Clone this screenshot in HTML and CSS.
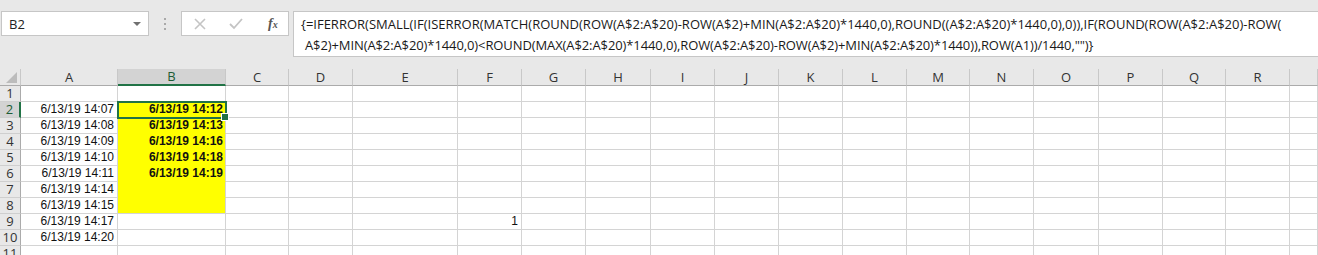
FILE: index.html
```html
<!DOCTYPE html>
<html lang="en">
<head>
    <meta charset="UTF-8">
    <title>Book1 - Excel</title>
    <link rel="stylesheet" href="styles.css">
</head>
<body>
    <div id="formula-bar">
        <div class="name-box">
            <span>B2</span>
            <i class="drop"></i>
        </div>
        <div class="grip">
            <svg width="3" height="12" viewBox="0 0 3 12"><rect x="0" y="0" width="2" height="2" fill="#a9a9a9"/><rect x="0" y="5" width="2" height="2" fill="#a9a9a9"/><rect x="0" y="10" width="2" height="2" fill="#a9a9a9"/></svg>
        </div>
        <div class="fx-box">
            <svg class="ico" width="12" height="12" viewBox="0 0 12 12"><path d="M1 1 L11 11 M11 1 L1 11" stroke="#c4c4c4" stroke-width="1.6" fill="none"/></svg>
            <svg class="ico" width="14" height="12" viewBox="0 0 14 12"><path d="M1 6 L5 10 L13 1" stroke="#c4c4c4" stroke-width="1.8" fill="none"/></svg>
            <span class="fx">f<sub>x</sub></span>
        </div>
        <div class="formula">
            <div class="line">{=IFERROR(SMALL(IF(ISERROR(MATCH(ROUND(ROW(A$2:A$20)-ROW(A$2)+MIN(A$2:A$20)*1440,0),ROUND((A$2:A$20)*1440,0),0)),IF(ROUND(ROW(A$2:A$20)-ROW(</div>
            <div class="line second">A$2)+MIN(A$2:A$20)*1440,0)&lt;ROUND(MAX(A$2:A$20)*1440,0),ROW(A$2:A$20)-ROW(A$2)+MIN(A$2:A$20)*1440)),ROW(A1))/1440,"")}</div>
        </div>
    </div>

    <table id="sheet">
        <colgroup>
            <col style="width:21px"><col style="width:97px"><col style="width:108px"><col style="width:63px">
            <col style="width:64px"><col style="width:105px"><col style="width:64px"><col style="width:64px">
            <col style="width:65px"><col style="width:64px"><col style="width:64px"><col style="width:64px">
            <col style="width:64px"><col style="width:63px"><col style="width:64px"><col style="width:65px">
            <col style="width:64px"><col style="width:63px"><col style="width:64px"><col style="width:28px">
        </colgroup>
        <tr class="head">
            <th class="corner"><i class="tri"></i></th>
            <th>A</th><th class="sel">B</th><th>C</th><th>D</th><th>E</th><th>F</th><th>G</th><th>H</th><th>I</th>
            <th>J</th><th>K</th><th>L</th><th>M</th><th>N</th><th>O</th><th>P</th><th>Q</th><th>R</th><th></th>
        </tr>
        <tr>
            <th class="rh">1</th>
            <td></td><td></td><td></td><td></td><td></td><td></td><td></td><td></td><td></td>
            <td></td><td></td><td></td><td></td><td></td><td></td><td></td><td></td><td></td><td></td>
        </tr>
        <tr>
            <th class="rh sel">2</th>
            <td>6/13/19 14:07</td><td class="fill active">6/13/19 14:12</td><td></td><td></td><td></td><td></td><td></td><td></td><td></td>
            <td></td><td></td><td></td><td></td><td></td><td></td><td></td><td></td><td></td><td></td>
        </tr>
        <tr>
            <th class="rh">3</th>
            <td>6/13/19 14:08</td><td class="fill">6/13/19 14:13</td><td></td><td></td><td></td><td></td><td></td><td></td><td></td>
            <td></td><td></td><td></td><td></td><td></td><td></td><td></td><td></td><td></td><td></td>
        </tr>
        <tr>
            <th class="rh">4</th>
            <td>6/13/19 14:09</td><td class="fill">6/13/19 14:16</td><td></td><td></td><td></td><td></td><td></td><td></td><td></td>
            <td></td><td></td><td></td><td></td><td></td><td></td><td></td><td></td><td></td><td></td>
        </tr>
        <tr>
            <th class="rh">5</th>
            <td>6/13/19 14:10</td><td class="fill">6/13/19 14:18</td><td></td><td></td><td></td><td></td><td></td><td></td><td></td>
            <td></td><td></td><td></td><td></td><td></td><td></td><td></td><td></td><td></td><td></td>
        </tr>
        <tr>
            <th class="rh">6</th>
            <td>6/13/19 14:11</td><td class="fill">6/13/19 14:19</td><td></td><td></td><td></td><td></td><td></td><td></td><td></td>
            <td></td><td></td><td></td><td></td><td></td><td></td><td></td><td></td><td></td><td></td>
        </tr>
        <tr>
            <th class="rh">7</th>
            <td>6/13/19 14:14</td><td class="fill"></td><td></td><td></td><td></td><td></td><td></td><td></td><td></td>
            <td></td><td></td><td></td><td></td><td></td><td></td><td></td><td></td><td></td><td></td>
        </tr>
        <tr>
            <th class="rh">8</th>
            <td>6/13/19 14:15</td><td class="fill last"></td><td></td><td></td><td></td><td></td><td></td><td></td><td></td>
            <td></td><td></td><td></td><td></td><td></td><td></td><td></td><td></td><td></td><td></td>
        </tr>
        <tr>
            <th class="rh">9</th>
            <td>6/13/19 14:17</td><td></td><td></td><td></td><td></td><td>1</td><td></td><td></td><td></td>
            <td></td><td></td><td></td><td></td><td></td><td></td><td></td><td></td><td></td><td></td>
        </tr>
        <tr>
            <th class="rh">10</th>
            <td>6/13/19 14:20</td><td></td><td></td><td></td><td></td><td></td><td></td><td></td><td></td>
            <td></td><td></td><td></td><td></td><td></td><td></td><td></td><td></td><td></td><td></td>
        </tr>
        <tr>
            <th class="rh">11</th>
            <td></td><td></td><td></td><td></td><td></td><td></td><td></td><td></td><td></td>
            <td></td><td></td><td></td><td></td><td></td><td></td><td></td><td></td><td></td><td></td>
        </tr>
    </table>
</body>
</html>
```

FILE: styles.css
```css
*{
    padding: 0;
    margin: 0;
    box-sizing: border-box;
}

body{
    width: 1318px;
    height: 255px;
    overflow: hidden;
    background: #fff;
    font-family: "Liberation Sans", Arial, sans-serif;
}

/* formula bar */
#formula-bar{
    display: flex;
    align-items: flex-start;
    height: 69px;
    padding: 11px 0 0 1px;
    background: #e8e8e8;
}

.name-box{
    width: 148px;
    height: 25px;
    background: #fff;
    border: 1px solid #c6c6c6;
    display: flex;
    align-items: center;
    justify-content: space-between;
    padding: 0 7px 0 7px;
    font-family: "Open Sans", sans-serif;
    font-size: 13px;
    color: #222;
}

.drop{
    width: 0;
    height: 0;
    border-left: 4px solid transparent;
    border-right: 4px solid transparent;
    border-top: 4px solid #707070;
}

.grip{
    width: 32px;
    height: 25px;
    display: flex;
    align-items: center;
    justify-content: center;
}

.fx-box{
    width: 108px;
    height: 25px;
    background: #fff;
    border: 1px solid #c6c6c6;
    display: flex;
    align-items: center;
    padding-left: 12px;
}

.fx-box .ico{
    margin-right: 23px;
}

.fx{
    margin-left: 2px;
    font-family: "Liberation Serif", serif;
    font-style: italic;
    font-weight: bold;
    font-size: 14px;
    color: #555;
}

.fx sub{
    font-size: 10px;
    vertical-align: 0;
}

.formula{
    flex: 1;
    height: 46px;
    margin-left: 4px;
    background: #fff;
    border: 1px solid #c6c6c6;
    border-right: none;
    padding: 2px 0 0 7px;
    font-family: "Open Sans", sans-serif;
    font-size: 13px;
    line-height: 21px;
    color: #1a1a1a;
    white-space: nowrap;
    overflow: hidden;
}

.formula .second{
    padding-left: 4px;
    letter-spacing: -0.1px;
}

/* grid */
#sheet{
    table-layout: fixed;
    border-collapse: separate;
    border-spacing: 0;
    width: 1318px;
}

#sheet th, #sheet td{
    height: 16px;
    padding: 0 3px;
    font-size: 12px;
    line-height: 15px;
    white-space: nowrap;
}

#sheet td{
    overflow: hidden;
    border-right: 1px solid #d4d4d4;
    border-bottom: 1px solid #d4d4d4;
    text-align: right;
    color: #111;
}

#sheet .head th{
    height: 17px;
    background: #e8e8e8;
    border-right: 1px solid #c8c8c8;
    border-bottom: 1px solid #ababab;
    font-family: "Open Sans", sans-serif;
    font-weight: normal;
    font-size: 13px;
    color: #333;
    text-align: center;
}

#sheet .head th.sel{
    background: #d3d3d3;
    border-bottom: 2px solid #217346;
    color: #1d5c36;
}

.corner{
    position: relative;
}

.tri{
    position: absolute;
    right: 3px;
    bottom: 2px;
    width: 11px;
    height: 11px;
    background: #bcbcbc;
    clip-path: polygon(100% 0, 100% 100%, 0 100%);
}

.rh{
    background: #e8e8e8;
    border-right: 1px solid #ababab;
    border-bottom: 1px solid #cfcfcf;
    font-family: "Open Sans", sans-serif;
    font-weight: normal;
    color: #333;
    text-align: center;
}

#sheet .rh{
    padding: 0;
    font-size: 13px;
}

.rh.sel{
    background: #d3d3d3;
    border-right: 2px solid #217346;
    color: #1d5c36;
}

#sheet td.fill{
    background: #ffff00;
    border-bottom-color: #ffff00;
    font-weight: bold;
    padding-right: 2px;
}

#sheet td.fill.last{
    border-bottom-color: #d4d4d4;
}

#sheet td.active{
    position: relative;
    overflow: visible;
    outline: 2px solid #217346;
    outline-offset: -1px;
}

.active::after{
    content: "";
    position: absolute;
    right: -4px;
    bottom: -4px;
    width: 6px;
    height: 6px;
    background: #217346;
    border: 1px solid #fff;
    z-index: 2;
}
```
